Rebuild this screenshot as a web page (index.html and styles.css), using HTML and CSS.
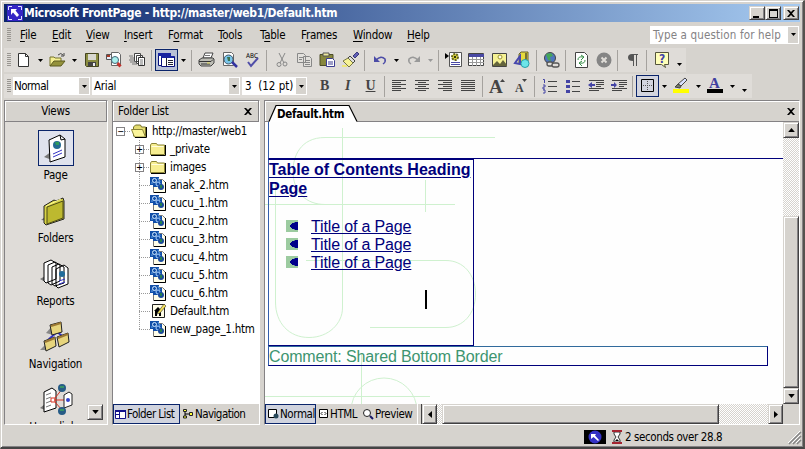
FILE: index.html
```html
<!DOCTYPE html>
<html lang="en">
<head>
<meta charset="utf-8">
<title>Microsoft FrontPage</title>
<link rel="stylesheet" href="styles.css">
</head>
<body>
<svg class="defs" width="0" height="0">
  <defs>
    <symbol id="down" viewBox="0 0 5 3"><path d="M0 0h5L2.5 3z"/></symbol>
    <symbol id="close" viewBox="0 0 8 7"><path d="M0 0h2l2 2 2-2h2L5 3.500 8 7H6L4 5 2 7H0l3-3.500z"/></symbol>
    <symbol id="htm" viewBox="0 0 16 16"><path d="M3.500 2.500h9l3 3v10h-12z" fill="#fffde8" stroke="#777"/><path d="M15.500 5v10.500H4" fill="none" stroke="#000"/><path d="M0 0h9v3h3v7H3V8H0z" fill="#124fa8"/><circle cx="4.500" cy="3.500" r="2" fill="none" stroke="#d4ecff"/><circle cx="8" cy="7" r="2" fill="none" stroke="#a9d1ff"/><path d="M1 6h2M8 1l2 4" stroke="#6aa8e8"/><circle cx="11" cy="10" r="3" fill="#1b4a9a"/><path d="M10 8h2v3h-2z" fill="#268050"/></symbol>
    <symbol id="folder" viewBox="0 0 16 14"><path d="M.5 12.500V3l1-1.500h5l1 1.500h7v9.500z" fill="#f7ee91" stroke="#8b8537"/><path d="M1.500 4.500h12" stroke="#fffde0"/><path d="M15.500 3v10.500H1" fill="none" stroke="#000"/></symbol>
    <symbol id="openfolder" viewBox="0 0 17 14"><path d="M2.500 12V3l2-2h5l1 2h4v9z" fill="#e4dc70" stroke="#77722a"/><path d="M.5 5.500h11l3 7.500h-11z" fill="#fbf59a" stroke="#8b8537"/><path d="M15.500 3v10.500H4" fill="none" stroke="#000"/></symbol>
  </defs>
</svg>
<div class="window">
  <header class="title">
    <svg class="logo" width="16" height="16"><path fill="#3425c5" d="M0 0h16v16H0z"/><path d="M1.500 5V1.500H5M11 1.500h3.500V5M1.500 11v3.500H5M11 14.500h3.500V11" fill="none" stroke="#dfe4ff"/><path d="M4 4h6L8.500 5.500 12 10l-2 2-4-4.500L4 10z" fill="#fff"/></svg>
    <span class="caption">Microsoft FrontPage - http://master/web1/Default.htm</span>
    <div class="winbtns">
      <i class="bevel"><svg width="14" height="11"><path d="M3 8h6v2H3z"/></svg></i><i class="bevel"><svg width="14" height="11"><path d="M3 1h9v9H3zM4 3v6h7V3z" fill-rule="evenodd"/></svg></i><i class="bevel last"><svg width="8" height="7"><use href="#close"/></svg></i>
    </div>
  </header>
  <nav class="menu">
    <i class="grip"></i>
    <span><u>F</u>ile</span><span><u>E</u>dit</span><span><u>V</u>iew</span><span><u>I</u>nsert</span><span>F<u>o</u>rmat</span><span><u>T</u>ools</span><span>T<u>a</u>ble</span><span>F<u>r</u>ames</span><span><u>W</u>indow</span><span><u>H</u>elp</span>
    <div class="ask"><span>Type a question for help</span><i class="drop"><svg width="5" height="3"><use href="#down"/></svg></i></div>
  </nav>
  <div class="bar bar1">
    <i class="grip"></i>
    <i class="b"><svg width="16" height="16"><path d="M2.500 1.500h7l3 3v10h-10z" fill="#fff" stroke="#333"/><path d="M9.500 1.500v3h3" fill="none" stroke="#333"/></svg></i>
    <i class="a"><svg width="5" height="3"><use href="#down"/></svg></i>
    <i class="b"><svg width="17" height="16"><path d="M1 14V5h4l1 1h6v3" fill="#f5ef93" stroke="#77752d"/><path d="M1 14l4-5h11l-4 5z" fill="#94923c" stroke="#5c5b20"/><path d="M9 3q3-3 5 0M15 1v3h-3" fill="none" stroke="#444"/></svg></i>
    <i class="a"><svg width="5" height="3"><use href="#down"/></svg></i>
    <i class="b"><svg width="16" height="16"><path d="M1.500 1.500h13v13h-12l-1-1z" fill="#8b8d42" stroke="#444520"/><path d="M4 2h8v6H4z" fill="#d8d8d0"/><path d="M4 10h8v4H4z" fill="#444"/><path d="M9 11h2v3H9z" fill="#eee"/></svg></i>
    <i class="b"><svg width="17" height="16"><path d="M.5 2.500h6v5h-6z" fill="#e7eefc" stroke="#555"/><path d="M1 3h3v2H1z" fill="#a83a28"/><path d="M5.500.5h7l2 2v11h-9z" fill="#fff" stroke="#666"/><circle cx="9" cy="8" r="3.500" fill="#aaf0ee" stroke="#467"/><path d="M11.500 11l3 3.500" stroke="#c1342e" stroke-width="3"/></svg></i>
    <i class="b"><svg width="17" height="16"><path d="M5.500 1.500h6v8h-6zM7.500 3.500h6v8h-6z" fill="#fff" stroke="#444"/><path d="M9.500 5.500h6v8h-6z" fill="#fff" stroke="#333"/><path d="M11 8h3M11 10h3M11 12h3M0 4h4M1 6h4M0 8h5M1 10h6M3 12h5" stroke="#777"/></svg></i>
    <i class="s"></i>
    <i class="b on"><svg width="17" height="16"><path d="M.5 1.500h12v12H.5z" fill="#fff" stroke="#08107c"/><path d="M0 1h13v3H0z" fill="#1723a0"/><path d="M3.500 4.500h13v10h-13z" fill="#fff" stroke="#08107c"/><path d="M3 4h13v2H3z" fill="#1723a0"/><path d="M8.500 6v8M10 8.500h5M10 10.500h5M10 12.500h5" stroke="#223"/></svg></i>
    <i class="a"><svg width="5" height="3"><use href="#down"/></svg></i>
    <i class="s"></i>
    <i class="b"><svg width="17" height="16"><path d="M5 6l2-5h8l-2 5z" fill="#fff" stroke="#444"/><path d="M1 8l3-2h11l1 1v4l-3 3H3l-2-2z" fill="#bdbdb5" stroke="#444"/><path d="M1 9.500h12l2-2M3 12h9" fill="none" stroke="#333"/><path d="M9 11h3" stroke="#e6e060"/><path d="M7 3.500h5" stroke="#777"/></svg></i>
    <i class="b"><svg width="17" height="16"><path d="M2.500.5h8l2 2v11h-10z" fill="#fff" stroke="#666"/><circle cx="7.500" cy="7.500" r="4.500" fill="#79c5e9" stroke="#456"/><path d="M6 5h3v4H7z" fill="#3b7452"/><path d="M11 10l5 5" stroke="#3434a0" stroke-width="2.500"/></svg></i>
    <i class="b"><svg width="16" height="17"><text x="1" y="6" font-size="6.500" textLength="12" class="tiny">ABC</text><path d="M3 10l3 4 7-8" fill="none" stroke="#504ea8" stroke-width="2"/></svg></i>
    <i class="s"></i>
    <i class="b"><svg width="16" height="16" fill="none" stroke="#888"><path d="M5 1l5 10M11 1L6 11"/><circle cx="5" cy="12.500" r="2"/><circle cx="11" cy="12" r="2"/></svg></i>
    <i class="b"><svg width="17" height="16" fill="#e2e0dc" stroke="#888"><path d="M1.500 1.500h6l2 2v7h-8zM7.500 4.500h6l2 2v8h-8z"/><path d="M3 5.500h4M3 7.500h3M9 8.500h5M9 10.500h5M9 12.500h5"/></svg></i>
    <i class="b"><svg width="17" height="16"><path d="M1 2.500h13v11H1z" fill="#87873e" stroke="#4d4d28"/><path d="M4 1h6v3H4z" fill="#eee9a0" stroke="#555"/><path d="M7.500 6.500h6l2 2v6h-8z" fill="#fff" stroke="#3c3c91"/><path d="M9 10h5M9 12h5" stroke="#3c3c91"/></svg></i>
    <i class="b"><svg width="17" height="16"><path d="M15 0l2 2-4 4-2-2z" fill="#6160b5" stroke="#3a397d"/><path d="M8 4l5 5-2 2-5-5z" fill="#ddd" stroke="#444"/><path d="M6 6l5 5-4 4-6-6z" fill="#f6f294" stroke="#777643"/><path d="M0 14h5" stroke="#eee77a" stroke-width="2"/></svg></i>
    <i class="s"></i>
    <i class="b"><svg width="16" height="16"><path d="M4 8q5-5 9-1 1 3-2 5" fill="none" stroke="#4c4ca7" stroke-width="1.500"/><path d="M2 4v6h6z" fill="#4c4ca7"/></svg></i>
    <i class="a"><svg width="5" height="3"><use href="#down"/></svg></i>
    <i class="b"><svg width="16" height="16"><path d="M12 8Q7 3 3 7q-1 3 2 5" fill="none" stroke="#999" stroke-width="1.500"/><path d="M14 4v6H8z" fill="#999"/></svg></i>
    <i class="a"><svg width="5" height="3" fill="#999"><use href="#down"/></svg></i>
    <i class="s"></i>
    <i class="b"><svg width="17" height="16"><path d="M0 1l4 3-4 3z"/><path d="M4.500.5h12v14h-12z" fill="#fff" stroke="#555"/><circle cx="10" cy="5" r="3" fill="#d7d339" stroke="#66641d" stroke-width="2" stroke-dasharray="2 1"/><circle cx="10" cy="5" r="1"/><path d="M6 10.500h9M6 12.500h9" stroke="#4848a3"/></svg></i>
    <i class="b"><svg width="17" height="16"><path d="M.5 1.500h15v12H.5z" fill="#fff" stroke="#444"/><path d="M1 2h15v3H1z" fill="#4a49a4"/><path d="M1 7.500h15M1 10.500h15M4.500 5v9M8.500 5v9M12.500 5v9" stroke="#999"/></svg></i>
    <i class="b"><svg width="16" height="16"><path d="M.5 1.500h14v13H.5z" fill="#f5f193" stroke="#444"/><circle cx="8" cy="5" r="2" fill="#fffde8" stroke="#999133"/><path d="M1 13l4-4 3 3 3-4 4 5v1H1z" fill="#64643c"/></svg></i>
    <i class="b"><svg width="17" height="17"><path d="M5 2l2-2h7v9l-2 2H5z" fill="#e6db3c" stroke="#66622b"/><path d="M1 11L6 4v8z" fill="none" stroke="#4747ad" stroke-width="2"/><path d="M12 1v9" stroke="#777234" stroke-width="2"/><circle cx="11" cy="11.500" r="4" fill="#6ce5e9" stroke="#299fa9"/></svg></i>
    <i class="s"></i>
    <i class="b"><svg width="17" height="17"><circle cx="7" cy="6" r="5.500" fill="#4e75bd" stroke="#444"/><path d="M3 2l5-1 2 3-3 1 1 4-3-1z" fill="#45a657"/><g fill="#dfdcd8" stroke="#555" stroke-width="1.300"><rect x="4" y="10" width="6" height="4" rx="2"/><rect x="9" y="11" width="7" height="4" rx="2"/></g></svg></i>
    <i class="s"></i>
    <i class="b"><svg width="16" height="16"><path d="M2.500.5h9l3 3v12h-12z" fill="#fff" stroke="#444"/><path d="M5 8q0-4 5-3M8 3l3 2-3 3M12 8q0 4-5 3M9 9l-3 2 3 3" fill="none" stroke="#358d45"/></svg></i>
    <i class="b"><svg width="16" height="16"><circle cx="8" cy="8" r="7.500" fill="#858585"/><path d="M5.500 5.500l5 5M10.500 5.500l-5 5" stroke="#e0ddd8" stroke-width="2"/></svg></i>
    <i class="s"></i>
    <i class="b"><svg width="16" height="16"><path d="M13 2v1h-1v11h-1V3H9v11H8V9Q3 9 3 5.500T7 2z" fill="#555"/></svg></i>
    <i class="s"></i>
    <i class="b"><svg width="16" height="17"><path d="M1.500.5h13v12h-4l1 3-4-3h-6z" fill="#ffffb9" stroke="#55553d"/><text x="5" y="11" font-size="12" font-weight="bold" fill="#4242a8">?</text></svg></i>
    <i class="more"><svg width="5" height="3"><use href="#down"/></svg></i>
  </div>
  <div class="bar bar2">
    <i class="grip"></i>
    <div class="combo c1"><span>Normal</span><i class="drop"><svg width="5" height="3"><use href="#down"/></svg></i></div>
    <div class="combo c2"><span>Arial</span><i class="drop"><svg width="5" height="3"><use href="#down"/></svg></i></div>
    <div class="combo c3"><span>3&nbsp; (12 pt)</span><i class="drop"><svg width="5" height="3"><use href="#down"/></svg></i></div>
    <i class="b fmt bold">B</i><i class="b fmt ital">I</i><i class="b fmt under">U</i>
    <i class="s"></i>
    <i class="b"><svg width="15" height="12" stroke="#444"><path d="M0 .5h14M0 2.500h9M0 4.500h14M0 6.500h9M0 8.500h14M0 10.500h9"/></svg></i>
    <i class="b"><svg width="15" height="12" stroke="#444"><path d="M0 .5h14M3 2.500h8M0 4.500h14M3 6.500h8M0 8.500h14M3 10.500h8"/></svg></i>
    <i class="b"><svg width="15" height="12" stroke="#444"><path d="M0 .5h14M5 2.500h9M0 4.500h14M5 6.500h9M0 8.500h14M5 10.500h9"/></svg></i>
    <i class="b"><svg width="15" height="12" stroke="#444"><path d="M0 .5h14M0 2.500h14M0 4.500h14M0 6.500h14M0 8.500h14M0 10.500h14"/></svg></i>
    <i class="s"></i>
    <i class="b"><svg width="17" height="17"><text x="0" y="15" class="serif" font-size="19">A</text><path d="M11 4l2.500-3L16 4z" fill="#444"/></svg></i>
    <i class="b"><svg width="17" height="17"><text x="3" y="14" class="serif" font-size="12">A</text><path d="M10 1h5l-2.500 3z" fill="#444"/></svg></i>
    <i class="s"></i>
    <i class="b"><svg width="16" height="16"><path d="M6 3.500h9M6 8.500h9M6 13.500h9" stroke="#444"/><path d="M1 1.500h1.500V5M1 7h2v2H1v2h2M1 12h2v3H1" fill="none" stroke="#4444a5"/></svg></i>
    <i class="b"><svg width="16" height="16"><path d="M7 3.500h8M7 8.500h8M7 13.500h8" stroke="#444"/><path d="M1 2h4v3H1zM1 7h4v3H1zM1 12h4v3H1z" fill="#4444a5"/></svg></i>
    <i class="b"><svg width="16" height="16"><path d="M1 2.500h15M8 4.500h8M8 6.500h8M8 8.500h5M1 10.500h15M1 12.500h10" stroke="#444"/><path d="M0 7l4-3v2h3v2H4v2z" fill="#4444a5"/></svg></i>
    <i class="b"><svg width="16" height="16"><path d="M1 2.500h15M8 4.500h8M8 6.500h8M8 8.500h5M1 10.500h15M1 12.500h10" stroke="#444"/><path d="M6 7L3 4v2H0v2h3v2z" fill="#4444a5"/></svg></i>
    <i class="s"></i>
    <i class="b on"><svg width="14" height="14"><path d="M.5.500h12v12H.500z" fill="none" stroke="#000"/><path d="M2 6.500h10M6.500 2v10" stroke="#555" stroke-dasharray="1 1"/></svg></i>
    <i class="a"><svg width="5" height="3"><use href="#down"/></svg></i>
    <i class="b"><svg width="17" height="16"><path d="M0 11h16v4H0z" fill="#ff0"/><path d="M5 6l7-6 2 2-6 6z" fill="#d9e0ff" stroke="#444"/><path d="M2 9l3-3 3 2-1 2z" fill="#777b65" stroke="#444"/></svg></i>
    <i class="a"><svg width="5" height="3"><use href="#down"/></svg></i>
    <i class="b"><svg width="17" height="16"><text x="2" y="10" class="serif blue" font-size="15">A</text><path d="M0 11h16v4H0z"/></svg></i>
    <i class="a"><svg width="5" height="3"><use href="#down"/></svg></i>
    <i class="more"><svg width="5" height="3"><use href="#down"/></svg></i>
  </div>

  <main class="main">
    <aside class="views panel">
      <h2 class="phead">Views</h2>
      <div class="vlist">
        <div class="v"><i class="vicon sel"><svg width="32" height="32"><path d="M4 25l8-6v9z" fill="#777"/><path d="M9 8l11-5 5 4v18L10 30z" fill="#fff" stroke="#000"/><path d="M20 3l1 5 4-1" fill="none" stroke="#000"/><circle cx="17" cy="13" r="4" fill="#246a93"/><path d="M15 10h4v3h-3z" fill="#2f9c5b"/><path d="M13 22l9-4M13 25l9-4" stroke="#3434c5"/></svg></i><span>Page</span></div>
        <div class="v"><i class="vicon"><svg width="32" height="32"><path d="M1 25l9-7v8z" fill="#777"/><path d="M4 11l10-6 2 1 7-3 1 3v18L6 30 4 28z" fill="#d7d344" stroke="#222"/><path d="M7 12l16-6v17L7 29z" fill="#bdb92f" stroke="#4c4a17"/><path d="M6 11l15-7" stroke="#fffd9b"/></svg></i><span>Folders</span></div>
        <div class="v"><i class="vicon"><svg width="32" height="32"><path d="M0 21l7-4v8z" fill="#777"/><g fill="#fff" stroke="#000"><path d="M4 5l7-3 5 3v16l-10 4-2-2zM8 7l7-3 5 3v16l-9 4-3-2zM12 9l7-3 5 3v16l-9 3-3-2zM16 11l8-4 4 3v16l-10 4-2-2z"/></g><circle cx="22" cy="16" r="3" fill="#206c9b"/><path d="M19 23l6-2M19 26l6-2" stroke="#3434c5"/></svg></i><span>Reports</span></div>
        <div class="v"><i class="vicon"><svg width="32" height="32"><path d="M0 29l8-8v8zM6 12l7-8v10z" fill="#888"/><path d="M17 11L8 19M17 11l8 6" stroke="#3535ca" stroke-width="2"/><g fill="#e7d57d" stroke="#222"><path d="M10 4l11-3 1 10-10 3zM4 20l11-4 1 9-10 5zM17 16l11-4 1 9-10 5z"/></g><path d="M11 5l10-3M5 21l10-4M18 17l10-4" stroke="#9b7834" stroke-width="2"/></svg></i><span>Navigation</span></div>
        <div class="v"><i class="vicon"><svg width="32" height="32"><path d="M0 24l5-4v6z" fill="#777"/><path d="M4 8l8-4 4 3v17L4 28z" fill="#fff" stroke="#000"/><path d="M6 11l5-2M6 15l5-2M6 19l5-2M6 23l5-2" stroke="#777"/><path d="M14 16h10M15 14l8-10M15 18l7 8" stroke="#d73222"/><path d="M11 14h4v4h-4z" fill="none" stroke="#d73222"/><path d="M24 11l5-3 3 2v11l-8 3z" fill="#fff" stroke="#222"/><circle cx="22" cy="4" r="4" fill="#275c86"/><circle cx="22" cy="27" r="4" fill="#275c86"/><path d="M20 2h4v2h-4zM20 25h4v2h-4z" fill="#369367"/><circle cx="28" cy="16" r="2" fill="#34c"/></svg></i><span>Hyperlinks</span></div>
      </div>
      <i class="bevel vscroll"><svg width="7" height="4" viewBox="0 0 5 3"><use href="#down"/></svg></i>
    </aside>

    <section class="folders panel">
      <h2 class="phead">Folder List<svg width="8" height="7"><use href="#close"/></svg></h2>
      <div class="tree">
        <div class="t root"><i class="pm">−</i><i class="dots"></i><svg width="17" height="14"><use href="#openfolder"/></svg><span>http://master/web1</span></div>
        <div class="kids">
          <div class="t"><i class="pm">+</i><i class="dots"></i><svg width="16" height="14"><use href="#folder"/></svg><span>_private</span></div>
          <div class="t"><i class="pm">+</i><i class="dots"></i><svg width="16" height="14"><use href="#folder"/></svg><span>images</span></div>
          <div class="t f"><i class="dots"></i><svg width="16" height="16"><use href="#htm"/></svg><span>anak_2.htm</span></div>
          <div class="t f"><i class="dots"></i><svg width="16" height="16"><use href="#htm"/></svg><span>cucu_1.htm</span></div>
          <div class="t f"><i class="dots"></i><svg width="16" height="16"><use href="#htm"/></svg><span>cucu_2.htm</span></div>
          <div class="t f"><i class="dots"></i><svg width="16" height="16"><use href="#htm"/></svg><span>cucu_3.htm</span></div>
          <div class="t f"><i class="dots"></i><svg width="16" height="16"><use href="#htm"/></svg><span>cucu_4.htm</span></div>
          <div class="t f"><i class="dots"></i><svg width="16" height="16"><use href="#htm"/></svg><span>cucu_5.htm</span></div>
          <div class="t f"><i class="dots"></i><svg width="16" height="16"><use href="#htm"/></svg><span>cucu_6.htm</span></div>
          <div class="t f"><i class="dots"></i><svg width="16" height="16"><path d="M2.500 1.500h12v13h-12z" fill="#fffde8" stroke="#222"/><path d="M4 8l4-4 4 4h-1v5H9v-3H7v3H5V8z"/><path d="M8 9l6-8 2 2-6 7-3 1z" fill="#f3df58" stroke="#333" stroke-width=".6"/></svg><span>Default.htm</span></div>
          <div class="t f"><i class="dots"></i><svg width="16" height="16"><use href="#htm"/></svg><span>new_page_1.htm</span></div>
        </div>
      </div>
      <div class="tabs">
        <div class="tab active"><svg width="11" height="9"><path d="M.5.500h10v8H.500zM4.500 1v8" fill="#fff" stroke="#11118a"/><path d="M0 0h11v2H0zM1 4h3v1H1z" fill="#11118a"/></svg><span>Folder List</span></div>
        <div class="tab"><svg width="11" height="10"><path d="M2 2v6M2 5h6" fill="none" stroke="#000"/><path d="M.5.500h3v2h-3zM.5 7h3v2h-3zM6.500 3.500h3v3h-3z" fill="#ffff37" stroke="#222"/></svg><span>Navigation</span></div>
      </div>
    </section>

    <section class="doc">
      <div class="dhead">
        <svg class="tabshape" width="94" height="18"><path d="M1 17L8 1.500h73L89 17.500V18H1z" fill="#fff"/><path d="M1 17.500L8 1.500h73L89 17.500" fill="none" stroke="#000" stroke-width="1.200"/></svg>
        <strong>Default.htm</strong>
        <svg class="dclose" width="8" height="7"><use href="#close"/></svg>
      </div>
      <div class="work">
        <div class="page">
          <svg class="art" width="519" height="283" fill="none" stroke="#cff1cf"><path d="M230 15.500H60C35 15.500 28 35 28 49C28 70 41 82.500 60 82.500M77.500 6v180C77.500 201 64 215.500 44 215.500S10.500 201 10.500 180V62M0 82.500h190M160.500 58v32M41 138.500h140C198 138.500 210.500 152 210.500 172S198 205.500 181 205.500h-76M96.500 231v52M0 274.500h165"/><circle cx="119" cy="289" r="33"/></svg>
          <div class="topborder"></div>
          <div class="cell">
            <h1>Table of Contents Heading Page</h1>
            <ul><li><a>Title of a Page</a></li><li><a>Title of a Page</a></li><li><a>Title of a Page</a></li></ul>
            <i class="caret"></i>
          </div>
          <div class="bottomborder">Comment: Shared Bottom Border</div>
        </div>
        <div class="vs"><i class="bevel"><svg width="7" height="4" viewBox="0 0 5 3"><path d="M0 3h5L2.500 0z"/></svg></i><i class="track"></i><i class="bevel thumb"></i><i class="bevel"><svg width="7" height="4" viewBox="0 0 5 3"><use href="#down"/></svg></i></div>
      </div>
      <div class="tabs dtabs">
        <div class="tab active n"><svg width="11" height="10"><path d="M.5.500h8v8h-8z" fill="#fff" stroke="#000"/><circle cx="8" cy="7" r="2.500" fill="#27485b"/></svg><span>Normal</span></div>
        <div class="tab h"><svg width="10" height="10"><path d="M.5.500h8v8h-8z" fill="#fff" stroke="#000"/><path d="M3.500 3L2 4.500 3.500 6M5.500 3L7 4.500 5.500 6" fill="none" stroke="#222"/></svg><span>HTML</span></div>
        <div class="tab p"><svg width="11" height="11"><circle cx="4" cy="4" r="3.500" fill="#fff" stroke="#222"/><path d="M7 7l3 3" stroke="#181866" stroke-width="2"/></svg><span>Preview</span></div>
        <i class="split"></i><i class="bevel hb"><svg width="4" height="7"><path d="M4 0v7L0 3.500z"/></svg></i><i class="gap"></i><i class="bevel hthumb"></i><i class="htrack"></i><i class="bevel hb"><svg width="4" height="7"><path d="M0 0v7l4-3.500z"/></svg></i><i class="corner"></i>
      </div>
    </section>
  </main>

  <footer class="status">
    <svg width="22" height="14"><path d="M0 0h22v14H0z"/><circle cx="11" cy="7" r="6.500" fill="#3431c5"/><path d="M7 4h5l-1 1.500 4 4.500-1 1-4.500-4L7 9z" fill="#fff"/></svg>
    <svg class="glass" width="10" height="14"><path d="M2 2l6 0v2L6 7l2 3v2H2v-2l2-3-2-3z" fill="#fff" stroke="#333"/><path d="M0 1h10M0 13h10" stroke="#a42431" stroke-width="2"/><path d="M3 11l2-2 2 2z"/></svg>
    <span>2 seconds over 28.8</span>
    <svg class="size" width="13" height="13"><path d="M1 13L13 1M5 13l8-8M9 13l4-4" stroke="#858585" stroke-width="1.500"/><path d="M0 12L12 0M4 12l8-8M8 12l4-4" stroke="#fff"/></svg>
  </footer>
</div>
</body>
</html>
```
FILE: styles.css
```css
* { box-sizing: border-box; }
body { margin: 0; overflow: hidden; background: #d6d3ce; font: 11.5px/14px "DejaVu Sans Condensed", "DejaVu Sans", sans-serif; font-stretch: condensed; letter-spacing: -.25px; color: #000; }
i { font-style: normal; display: flex; align-items: center; justify-content: center; flex: none; }
svg { display: block; flex: none; overflow: visible; }
h1, h2, ul { margin: 0; padding: 0; font-weight: normal; }
span { white-space: nowrap; }
.defs { position: absolute; }
.window { width: 805px; height: 449px; border: solid #d6d3ce; border-width: 1px 2px 2px 1px; border-right-color: #55524f; border-bottom-color: #444; box-shadow: inset 1px 1px #fff, inset -1px -1px #848284; padding: 3px 0 0 3px; display: flex; flex-direction: column; }
.bevel { background: #d6d3ce; border: 1px solid; border-color: #d6d3ce #424142 #424142 #d6d3ce; box-shadow: inset 1px 1px #fff, inset -1px -1px #848284; }

.title { height: 18px; width: 796px; display: flex; align-items: center; background: linear-gradient(90deg, #0a246a, #a6caf0); color: #fff; padding-left: 3px; }
.logo { margin-right: 1px; }
.caption { font: bold 12px/17px "DejaVu Sans Condensed", sans-serif; font-stretch: condensed; letter-spacing: -.31px; flex: 1; }
.winbtns { display: flex; margin-right: 1px; }
.winbtns .bevel { width: 16px; height: 14px; }
.winbtns .last { margin-left: 2px; }

.menu { height: 26px; display: grid; grid-template-columns: 16px 32px 34px 38px 44px 50px 42px 41px 52px 54px 243px 149px; align-items: center; }
.menu u { text-underline-offset: 2px; }
.grip { width: 4px; height: 14px; margin-left: 3px; justify-self: start; background: repeating-linear-gradient(#999691 0 1px, transparent 1px 2px); }
.ask { grid-column: 12; height: 18px; background: #fff; color: #848284; letter-spacing: .15px; display: flex; justify-content: space-between; align-items: center; padding: 1px 1px 1px 3px; margin-top: -1px; }
.drop { width: 10px; height: 100%; background: #d6d3ce; }

.bar { display: flex; align-items: center; height: 24px; background: #dfdcd8; }
.bar1 { width: 682px; }
.bar2 { width: 748px; margin-top: 2px; }
.bar .grip { margin-right: 1px; }
.b { width: 23px; height: 23px; }
.on { border: 1px solid #0a246a; background: #d3d5df; height: 22px; }
.bar1 .on { background: #b9c1d7; }
.a { width: 11px; padding-top: 1px; }
.s { width: 6px; height: 21px; background: linear-gradient(#a5a29e, #a5a29e) 2px 0 / 1px 100% no-repeat; }
.more { width: 12px; align-self: flex-end; margin-bottom: 6px; }
.tiny { font-family: "DejaVu Sans Condensed"; letter-spacing: 0; }
.serif { font-family: "Liberation Serif"; font-weight: bold; fill: #444; }
.blue { fill: #4141a0; }
.combo { height: 18px; background: #fff; display: flex; align-items: center; justify-content: space-between; padding: 1px 1px 1px 2px; }
.c1 { width: 77px; margin: 0 2px 0 4px; padding-left: 1px; letter-spacing: -.5px; }
.c2 { width: 148px; padding-left: 2px; }
.c3 { width: 65px; margin: 0 3px 0 2px; padding-left: 3px; letter-spacing: 0; }
.bar2 .grip { margin-right: -2px; }
.bar2 > .bold { margin-left: 3px; }
.fmt { font: bold 14px "Liberation Serif", serif; color: #444; }
.ital { font-style: italic; }
.under { text-decoration: underline; }

.main { display: grid; grid-template-columns: 104px 148px 536px; column-gap: 4px; height: 325px; margin-top: 2px; }
.panel { border: 1px solid #848284; border-right-color: #fff; border-bottom-color: #fff; display: flex; flex-direction: column; overflow: hidden; position: relative; }
.phead { font-size: 11.500px; line-height: 19px; height: 21px; border: solid #848284; border-width: 0 1px 1px 0; box-shadow: inset 1px 1px #fff; flex: none; text-align: center; background: #d6d3ce; padding-top: 1px; }
.views { background: #dfdcd8; }
.vlist { padding-top: 8px; padding-right: 1px; flex: 1; overflow: hidden; }
.v { height: 63px; display: flex; flex-direction: column; align-items: center; }
.vicon { width: 36px; height: 36px; margin-bottom: 2px; }
.sel { border: 1px solid #0a246a; background: #dfe2ed; }
.vscroll { position: absolute; right: 4px; bottom: 4px; width: 16px; height: 16px; }
.folders { background: #fff; }
.folders .phead { display: flex; justify-content: space-between; align-items: center; padding: 1px 6px 0 5px; }
.tree { flex: 1; }
.t { height: 18px; display: flex; align-items: center; padding-left: 22px; }
.root { padding-left: 3px; }
.t span { margin-left: 4px; }
.pm { width: 9px; height: 9px; border: 1px solid #848284; font: 10px/7px "DejaVu Sans Mono"; letter-spacing: 0; background: #fff; }
.dots { width: 6px; height: 1px; background: repeating-linear-gradient(90deg, #999 0 1px, transparent 1px 2px); }
.f { padding-left: 26px; }
.f .dots { width: 11px; }
.kids { background: repeating-linear-gradient(#999 0 1px, #fff 1px 2px) 26px 0 / 1px 190px no-repeat; }
.tabs { height: 20px; display: flex; background: #d6d3ce; flex: none; }
.tab { display: flex; align-items: center; padding-left: 3px; }
.tab span { margin-left: 1px; letter-spacing: -.55px; }
.tab.active { width: 67px; border: 1px solid #0a246a; background: #d0d3de; padding-left: 1px; }

.doc { border: 1px solid #848284; border-right-color: #fff; border-bottom-color: #fff; display: flex; flex-direction: column; }
.dhead { position: relative; height: 21px; flex: none; border-bottom: 1px solid #848284; box-shadow: inset 1px 1px #fff; display: flex; align-items: center; }
.tabshape { position: absolute; left: 3px; bottom: -1px; }
.dhead strong { position: relative; margin: 6px auto 0 12px; font-size: 11.500px; letter-spacing: -.25px; }
.dclose { margin-right: 4px; }
.work { height: 282px; display: flex; }
.page { position: relative; flex: 1; background: #fefefe; overflow: hidden; padding-left: 3px; font-family: "Liberation Sans", Arial, sans-serif; font-size: 16px; line-height: 18px; letter-spacing: 0; }
.art { position: absolute; left: 0; top: 0; }
.topborder, .cell, .bottomborder { position: relative; }
.topborder { height: 37px; border: solid #00007b; border-width: 0 0 1px 1px; border-left-color: #315dad; }
.cell { width: 206px; height: 187px; border: 1px solid #00007b; border-left-color: #315dad; }
h1 { font-size: 16px; line-height: 19px; font-weight: bold; text-decoration: underline; color: #00007b; text-underline-offset: 2px; }
ul { list-style: none; margin-top: 20px; padding-left: 42px; letter-spacing: -.15px; }
li { color: #00007b; height: 18px; position: relative; }
li::before { content: ""; position: absolute; left: -25px; top: 2px; width: 12px; height: 12px; background: radial-gradient(ellipse 8px 4px at 12px 6px, #00008b 95%, transparent) , #9ccba0; }
a { text-decoration: underline; }
.caret { position: absolute; left: 156px; top: 130px; width: 2px; height: 19px; background: #000; }
.bottomborder { width: 500px; height: 20px; border: 1px solid #00007b; border-color: #316a9c #00007b #00007b #315dad; color: #3d9570; line-height: 19px; letter-spacing: -.14px; }
.vs { width: 16px; display: flex; flex-direction: column; }
.vs .bevel { height: 16px; width: 16px; }
.vs .thumb { flex: 1; }
.track { height: 78px; }
.track, .htrack, .gap { background: repeating-conic-gradient(#fff 0 25%, #d6d3ce 0 50%) 0 0 / 2px 2px; }
.dtabs .n { width: 51px; padding-left: 2px; }
.dtabs .h { width: 44px; padding-left: 3px; }
.dtabs .p { width: 57px; }
.dtabs .tab span { margin-left: 1px; letter-spacing: -.4px; }
.split { width: 5px; border-left: 1px solid #fff; border-right: 1px solid #424142; }
.hb { width: 15px; height: 20px; }
.gap { width: 5px; }
.hthumb { flex: 1; height: 20px; }
.htrack { width: 49px; height: 20px; }
.corner { width: 16px; }

.status { flex: 1; display: flex; align-items: center; padding: 1px 2px 0 580px; letter-spacing: -.4px; }
.glass { margin: 0 3px 0 6px; }
.size { margin-left: auto; align-self: flex-end; margin-bottom: 3px; }
```
